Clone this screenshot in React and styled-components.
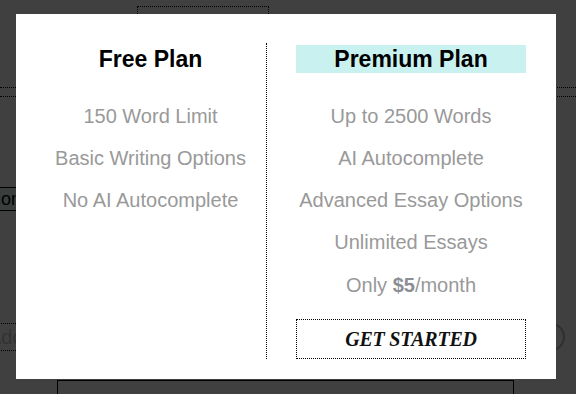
import React from "react";
import styled, { createGlobalStyle } from "styled-components";

const Global = createGlobalStyle`
  html, body { margin: 0; padding: 0; background: #fff; }
  body { font-family: "Liberation Sans", Arial, sans-serif; }
  * { box-sizing: border-box; }
`;

const Page = styled.div`
  position: relative;
  width: 576px;
  height: 394px;
  overflow: hidden;
  display: flex;
  flex-direction: column;
`;

const TopTab = styled.div`
  margin: 6px 0 0 137px;
  width: 132px;
  height: 60px;
  flex-shrink: 0;
  border: 1px dotted #000;
  border-bottom: none;
`;

const HeaderRule = styled.div`
  margin-top: 21px;
  height: 10px;
  flex-shrink: 0;
  border-top: 1px dotted #000;
  border-bottom: 1px dotted #000;
`;

const OptionButton = styled.div`
  margin: 90px 0 0 -38px;
  width: 120px;
  height: 24px;
  flex-shrink: 0;
  border: 1px solid #000;
  background: #e6f9f7;
  padding: 0 5px;
  font-size: 18px;
  line-height: 22px;
  color: #000;
`;

const InputRow = styled.div`
  margin-top: 112px;
  display: flex;
  align-items: center;
  justify-content: space-between;
  flex-shrink: 0;
  height: 28px;
`;

const AddInput = styled.div`
  margin-left: -12px;
  width: 300px;
  height: 28px;
  border-top: 1px dotted #000;
  border-bottom: 1px dotted #000;
  font-size: 20px;
  line-height: 26px;
  color: #c8c8c8;
`;

const Circle = styled.div`
  margin-right: 11px;
  width: 28px;
  height: 28px;
  border-radius: 50%;
  border: 2px solid #bbb;
`;

const BottomBox = styled.div`
  margin: 29px 0 0 57px;
  width: 457px;
  height: 60px;
  flex-shrink: 0;
  border: 1px solid #000;
  text-align: center;
  font-size: 18px;
  padding-top: 11px;
`;

const Overlay = styled.div`
  position: fixed;
  inset: 0;
  background: rgba(0, 0, 0, 0.75);
`;

const Modal = styled.div`
  position: fixed;
  left: 16px;
  top: 14px;
  width: 540px;
  height: 365px;
  background: #fff;
  padding: 29px 30px 20px 20px;
  display: flex;
`;

const Column = styled.div`
  width: ${(p) => (p.$divider ? 231 : 230)}px;
  display: flex;
  flex-direction: column;
  align-items: center;
  border-right: ${(p) => (p.$divider ? "1px dotted #000" : "none")};
  margin-left: ${(p) => (p.$divider ? 0 : 29)}px;
  padding-right: ${(p) => (p.$divider ? 1 : 0)}px;
`;

const PlanTitle = styled.h2`
  margin: 2px 0 0;
  width: 230px;
  height: 28px;
  font-size: 23px;
  line-height: 28px;
  font-weight: 700;
  text-align: center;
  color: #000;
  background: ${(p) => (p.$highlight ? "#c9f1ef" : "transparent")};
`;

const FeatureList = styled.ul`
  list-style: none;
  margin: 21.5px 0 0;
  padding: 0;
  width: 100%;
`;

const Feature = styled.li`
  font-size: 20px;
  line-height: 42.25px;
  text-align: center;
  color: #999;
  white-space: nowrap;
`;

const Price = styled.b`
  font-weight: 700;
  color: #8b8e94;
`;

const StartButton = styled.button`
  margin-top: auto;
  width: 230px;
  height: 40px;
  border: 1px dotted #000;
  background: #fff;
  padding: 0;
  font-family: "Liberation Serif", "Times New Roman", serif;
  font-style: italic;
  font-weight: 700;
  font-size: 20px;
  line-height: 38px;
  letter-spacing: -0.2px;
  color: #111;
  cursor: pointer;
`;

export default function App() {
  return (
    <>
      <Global />
      <Page>
        <TopTab />
        <HeaderRule />
        <OptionButton>Options</OptionButton>
        <InputRow>
          <AddInput>Add</AddInput>
          <Circle />
        </InputRow>
        <BottomBox>Add Essay</BottomBox>
      </Page>
      <Overlay />
      <Modal>
        <Column $divider>
          <PlanTitle>Free Plan</PlanTitle>
          <FeatureList>
            <Feature>150 Word Limit</Feature>
            <Feature>Basic Writing Options</Feature>
            <Feature>No AI Autocomplete</Feature>
          </FeatureList>
        </Column>
        <Column>
          <PlanTitle $highlight>Premium Plan</PlanTitle>
          <FeatureList>
            <Feature>Up to 2500 Words</Feature>
            <Feature>AI Autocomplete</Feature>
            <Feature>Advanced Essay Options</Feature>
            <Feature>Unlimited Essays</Feature>
            <Feature>
              Only <Price>$5</Price>/month
            </Feature>
          </FeatureList>
          <StartButton>GET STARTED</StartButton>
        </Column>
      </Modal>
    </>
  );
}
